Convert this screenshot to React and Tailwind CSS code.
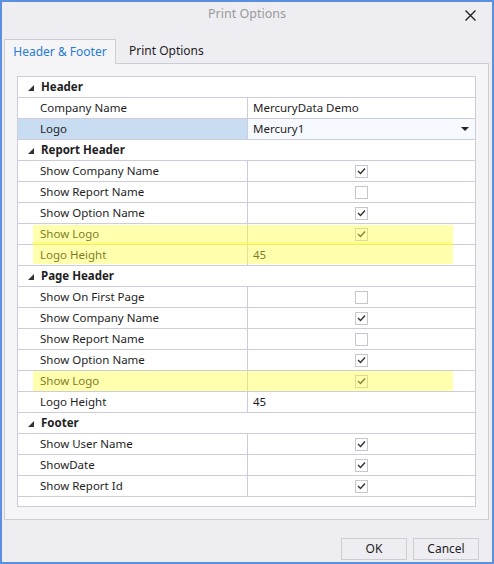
import React from "react";

const groups = [
  {
    title: "Header",
    rows: [
      { label: "Company Name", value: "MercuryData Demo" },
      { label: "Logo", value: "Mercury1", selected: true, dropdown: true },
    ],
  },
  {
    title: "Report Header",
    rows: [
      { label: "Show Company Name", check: true },
      { label: "Show Report Name", check: false },
      { label: "Show Option Name", check: true },
      { label: "Show Logo", check: true, mark: "top" },
      { label: "Logo Height", value: "45", mark: "bottom" },
    ],
  },
  {
    title: "Page Header",
    rows: [
      { label: "Show On First Page", check: false },
      { label: "Show Company Name", check: true },
      { label: "Show Report Name", check: false },
      { label: "Show Option Name", check: true },
      { label: "Show Logo", check: true, mark: "single" },
      { label: "Logo Height", value: "45" },
    ],
  },
  {
    title: "Footer",
    rows: [
      { label: "Show User Name", check: true },
      { label: "ShowDate", check: true },
      { label: "Show Report Id", check: true },
    ],
  },
];

function Checkbox({ checked }) {
  return (
    <div className="w-[13px] h-[13px] border border-[#c6c6d0] bg-white flex items-center justify-center">
      {checked && (
        <svg width="9" height="8" viewBox="0 0 9 8">
          <path d="M1 4 L3.5 6.5 L8 1.5" fill="none" stroke="#333" strokeWidth="1.4" />
        </svg>
      )}
    </div>
  );
}

function GroupRow({ title }) {
  return (
    <div className="h-[21px] flex items-center border-b border-[#ccccda] pl-[10px]">
      <svg width="6" height="6" viewBox="0 0 6 6" className="mr-[7px] mt-[1px]">
        <polygon points="6,0 6,6 0,6" fill="#333" />
      </svg>
      <span className="font-bold text-[#1e1e1e]">{title}</span>
    </div>
  );
}

function PropRow({ row }) {
  return (
    <div className="relative h-[21px] flex border-b border-[#ccccda]">
      <div
        className={`w-[230px] flex items-center pl-[22px] border-r border-[#ccccda] ${
          row.selected ? "bg-[#c9ddf2]" : ""
        }`}
      >
        {row.label}
      </div>
      <div
        className={`flex-1 flex items-center ${
          row.value !== undefined ? "pl-[5px]" : "justify-center"
        } ${row.selected ? "bg-[#f6f9fd]" : ""}`}
      >
        {row.value !== undefined ? row.value : <Checkbox checked={row.check} />}
        {row.dropdown && (
          <svg width="8" height="4" viewBox="0 0 8 4" className="ml-auto mr-[6px]">
            <polygon points="0,0 8,0 4,4" fill="#222" />
          </svg>
        )}
      </div>
      {row.mark === "top" && (
        <div className="absolute left-[15px] w-[420px] top-[1px] -bottom-[1px] bg-[#ffff33]/40" />
      )}
      {row.mark === "bottom" && (
        <div className="absolute left-[15px] w-[420px] -top-[3px] bottom-[1px] bg-[#ffff33]/40" />
      )}
      {row.mark === "single" && (
        <div className="absolute left-[15px] w-[420px] top-0 bottom-0 bg-[#ffff33]/40" />
      )}
    </div>
  );
}

export default function App() {
  return (
    <div
      className="w-[494px] h-[564px] bg-[#eeedf2] border-2 border-[#5b8fe0] flex flex-col text-[11.5px] text-[#1e1e1e]"
      style={{ fontFamily: '"Segoe UI", "Noto Sans", Arial, sans-serif' }}
    >
      <div className="h-[31px] flex items-start pt-[3px] relative">
        <div className="flex-1 text-center text-[12.5px] text-[#9a9a9a]">Print Options</div>
        <svg width="11" height="11" viewBox="0 0 11 11" className="absolute right-[16px] top-[8px]">
          <path d="M0.5 0.5 L10.5 10.5 M10.5 0.5 L0.5 10.5" stroke="#222" strokeWidth="1.4" />
        </svg>
      </div>

      <div className="flex mt-[6px] ml-[2px]">
        <div className="h-[25px] w-[112px] border border-b-0 border-[#cdcdd6] bg-[#f5f5f7] flex items-center justify-center text-[#2a7bd4] text-[12px] relative z-10 -mb-[1px]">
          Header &amp; Footer
        </div>
        <div className="h-[24px] px-[13px] flex items-center text-[12px]">Print Options</div>
      </div>

      <div className="mx-[2px] mr-[3px] h-[457px] border border-[#cdcdd6] bg-[#f5f5f7] p-[12px]">
        <div className="h-full border border-[#ccccda] bg-white">
          {groups.map((g) => (
            <div key={g.title + g.rows.length}>
              <GroupRow title={g.title} />
              {g.rows.map((r, i) => (
                <PropRow key={i} row={r} />
              ))}
            </div>
          ))}
        </div>
      </div>

      <div className="flex justify-end gap-[6px] mt-[18px] mr-[13px]">
        <button className="w-[66px] h-[22px] border border-[#cdcdd6] bg-[#eeedf2] text-[12px]">OK</button>
        <button className="w-[66px] h-[22px] border border-[#cdcdd6] bg-[#eeedf2] text-[12px]">Cancel</button>
      </div>
    </div>
  );
}
